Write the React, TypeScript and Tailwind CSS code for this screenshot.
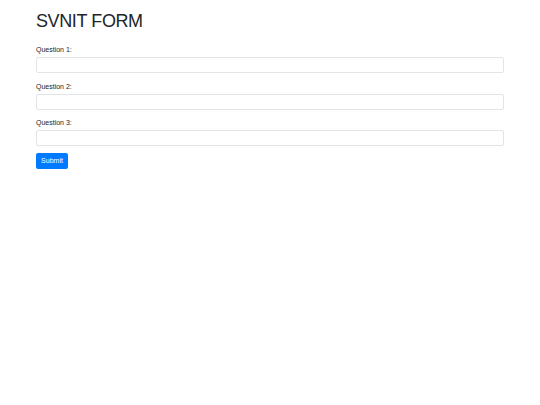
import React from 'react';

const questions = ['Question 1:', 'Question 2:', 'Question 3:'];

export default function App() {
  return (
    <div className="min-h-[405px] bg-white font-['Liberation_Sans',Arial,sans-serif] text-[#212529]">
      <div className="mx-auto w-[468px] pt-[10px]">
        <h1 className="mb-[12px] text-[18px] leading-[22px] font-normal tracking-[-0.4px]">SVNIT FORM</h1>
        <form onSubmit={(e) => e.preventDefault()}>
          {questions.map((q, i) => (
            <div key={i} className="mb-[7.5px]">
              <label htmlFor={`q${i + 1}`} className="mb-[1px] block text-[7px] leading-[12px] text-[#212529]">
                {q}
              </label>
              <input
                id={`q${i + 1}`}
                type="text"
                className="block h-[16px] w-full rounded-[2px] border border-[#e2e5e8] bg-white px-[6px] text-[8px] outline-none"
              />
            </div>
          ))}
          <button
            type="submit"
            className="-mt-[1px] block h-[16px] w-[32px] rounded-[2px] bg-[#007bff] text-center text-[7px] leading-[16px] text-white"
          >
            Submit
          </button>
        </form>
      </div>
    </div>
  );
}
